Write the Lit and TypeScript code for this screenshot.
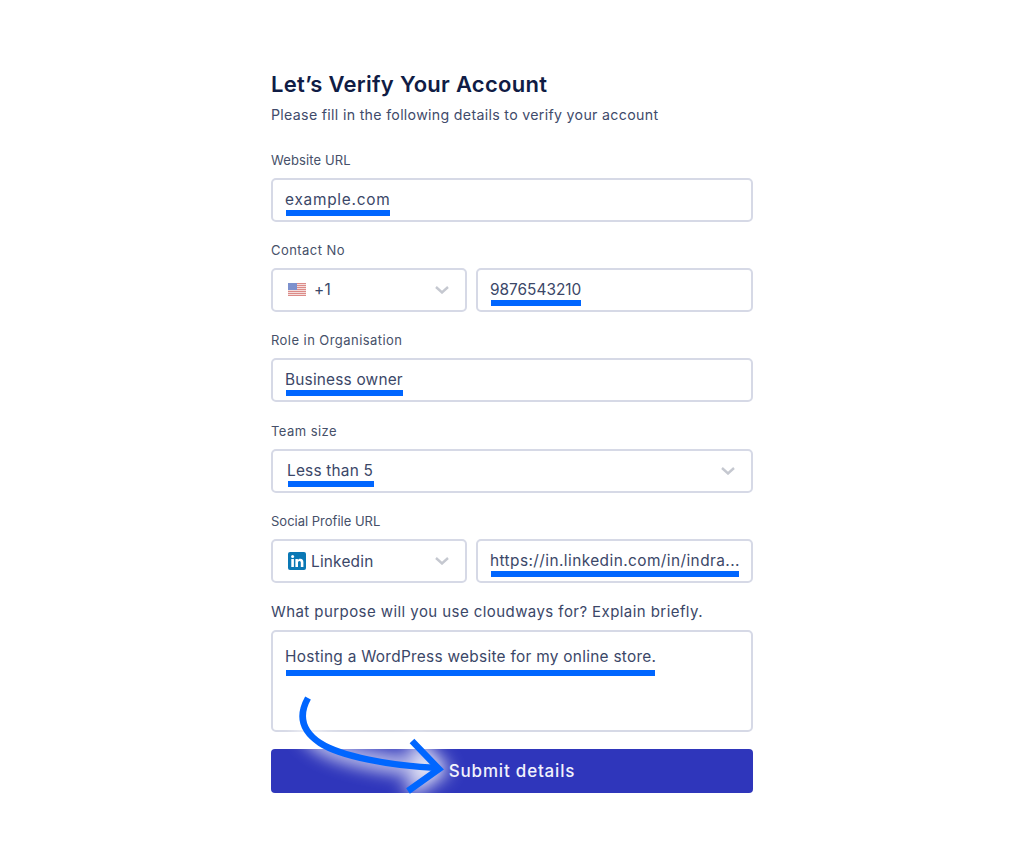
import { LitElement, html, css, svg } from "lit";
import { customElement } from "lit/decorators.js";

const chevron = html`<svg class="chev" width="14" height="8" viewBox="0 0 14 8"><path d="M1 1l6 5.500L13 1" fill="none" stroke="#c5c8d0" stroke-width="2.400"/></svg>`;

const flag = html`<svg class="ico flag" width="18" height="13" viewBox="0 0 18 13">
  <rect width="18" height="13" rx="1" fill="#f3d9d8"/>
  ${[0, 2, 4, 6, 8, 10, 12].map((y) => svg`<rect y="${y}" width="18" height="1" fill="#d97f7c"/>`)}
  <rect width="9" height="7" fill="#6f86c8"/>
</svg>`;

const linkedin = html`<svg class="ico" width="18" height="18" viewBox="0 0 18 18">
  <rect width="18" height="18" rx="2" fill="#0a78b5"/>
  <circle cx="4.600" cy="4.400" r="1.500" fill="#fff"/>
  <rect x="3.300" y="7" width="2.600" height="8" fill="#fff"/>
  <path d="M7.400 7h2.500v1.100c.5-.8 1.400-1.300 2.500-1.300 2.100 0 3 1.300 3 3.500V15h-2.600v-4.200c0-1.100-.4-1.800-1.300-1.800-1 0-1.500.7-1.500 1.800V15H7.400z" fill="#fff"/>
</svg>`;

@customElement("app-root")
export class AppRoot extends LitElement {
  static styles = css`
    :host {
      display: block;
      width: 1024px;
      height: 864px;
      position: relative;
      background: #fff;
      font-family: "Inter", "Liberation Sans", sans-serif;
      color: #3b4768;
      overflow: hidden;
    }
    .form {
      width: 482px;
      margin-left: 271px;
      padding-top: 71px;
      display: flex;
      flex-direction: column;
    }
    h1 {
      margin: 0;
      font-size: 22px;
      line-height: 27px;
      font-weight: 600;
      color: #101c45;
      letter-spacing: 0.27px;
    }
    .sub {
      margin: 7px 0 0;
      font-size: 14.200px;
      line-height: 20px;
      letter-spacing: 0.31px;
      color: #3f4b6b;
    }
    .fields {
      margin-top: 25px;
      display: flex;
      flex-direction: column;
      gap: 18px;
    }
    .field {
      display: flex;
      flex-direction: column;
      gap: 8.400px;
    }
    .field.contact {
      margin-top: -0.900px;
    }
    .field.size {
      margin-top: 0.500px;
    }
    .field.social {
      margin-top: -0.300px;
    }
    .field.purpose {
      margin-top: 0.700px;
    }
    label {
      display: block;
      font-size: 13px;
      line-height: 20px;
      letter-spacing: 0.12px;
      color: #465069;
    }
    label.wide {
      letter-spacing: 0.44px;
    }
    label.tight {
      letter-spacing: 0;
    }
    label.big {
      font-size: 15px;
      letter-spacing: 0.43px;
      color: #3b4768;
    }
    .box {
      box-sizing: border-box;
      height: 44px;
      border: 2px solid #d6d9e6;
      border-radius: 5px;
      padding: 0 12px;
      display: flex;
      align-items: center;
      font-size: 15.400px;
      letter-spacing: 0.2px;
      color: #3b4768;
      background: #fff;
      min-width: 0;
    }
    .box.area {
      height: 102px;
      align-items: flex-start;
      padding-top: 13.500px;
    }
    .row {
      display: grid;
      grid-template-columns: 196px 1fr;
      gap: 9px;
    }
    .box.select {
      justify-content: space-between;
      padding: 0 16px 0 15px;
    }
    .box.select.team {
      padding-left: 14px;
    }
    .pick {
      display: flex;
      align-items: center;
      gap: 8px;
    }
    .pick.li {
      gap: 5px;
    }
    .ico {
      flex: none;
    }
    .flag {
      filter: blur(0.4px);
      opacity: 0.9;
    }
    .mark {
      display: inline-block;
      position: relative;
      white-space: nowrap;
      line-height: 22px;
    }
    .mark::after {
      content: "";
      position: absolute;
      left: 1px;
      right: 0;
      top: 21px;
      height: 6px;
      background: #0066ff;
    }
    .mark.s075 {
      letter-spacing: 0.75px;
    }
    .mark.s043 {
      letter-spacing: 0.43px;
    }
    .mark.s028 {
      letter-spacing: 0.28px;
    }
    .mark.s0 {
      letter-spacing: 0;
    }
    .area .mark::after {
      top: 24px;
    }
    button {
      margin-top: 17px;
      height: 44px;
      border: 0;
      border-radius: 4px;
      background: #2f36bb;
      color: #f1f2fc;
      font: 500 17px "Inter", "Liberation Sans", sans-serif;
      letter-spacing: 0.8px;
    }
    .arrow {
      position: absolute;
      left: 0;
      top: 0;
      pointer-events: none;
    }
  `;

  private mark(text: string, width: number, cls = "") {
    return html`<span class="mark ${cls}" style="width:${width}px">${text}</span>`;
  }

  render() {
    const curve = "M308 698C298 716 302 731 320 743C340 756 390 766 438 768";
    const head = "M412 741L439 769L408 791";
    return html`
      <div class="form">
        <h1>Let’s Verify Your Account</h1>
        <p class="sub">Please fill in the following details to verify your account</p>
        <div class="fields">
          <div class="field">
            <label>Website URL</label>
            <div class="box">${this.mark("example.com", 105, "s075")}</div>
          </div>
          <div class="field contact">
            <label class="wide">Contact No</label>
            <div class="row">
              <div class="box select">
                <span class="pick">${flag}<span>+1</span></span>${chevron}
              </div>
              <div class="box">${this.mark("9876543210", 91, "s0")}</div>
            </div>
          </div>
          <div class="field">
            <label class="wide">Role in Organisation</label>
            <div class="box">${this.mark("Business owner", 118)}</div>
          </div>
          <div class="field size">
            <label class="wide">Team size</label>
            <div class="box select team">${this.mark("Less than 5", 87)}${chevron}</div>
          </div>
          <div class="field social">
            <label class="tight">Social Profile URL</label>
            <div class="row">
              <div class="box select">
                <span class="pick li">${linkedin}<span>Linkedin</span></span>${chevron}
              </div>
              <div class="box">${this.mark("https://in.linkedin.com/in/indra...", 249, "s043")}</div>
            </div>
          </div>
          <div class="field purpose">
            <label class="big">What purpose will you use cloudways for? Explain briefly.</label>
            <div class="box area">${this.mark("Hosting a WordPress website for my online store.", 370, "s028")}</div>
          </div>
        </div>
        <button>Submit details</button>
      </div>
      <svg class="arrow" width="1024" height="864" viewBox="0 0 1024 864">
        <defs>
          <filter id="glow" x="-30%" y="-30%" width="160%" height="160%"><feGaussianBlur stdDeviation="9"/></filter>
        </defs>
        <g fill="none" stroke="#fff" stroke-width="14" filter="url(#glow)" opacity="0.95">
          <path d="${curve}"/><path d="${head}"/>
        </g>
        <g fill="none" stroke="#0066ff" stroke-width="6.500">
          <path d="${curve}"/><path d="${head}"/>
        </g>
      </svg>
    `;
  }
}
